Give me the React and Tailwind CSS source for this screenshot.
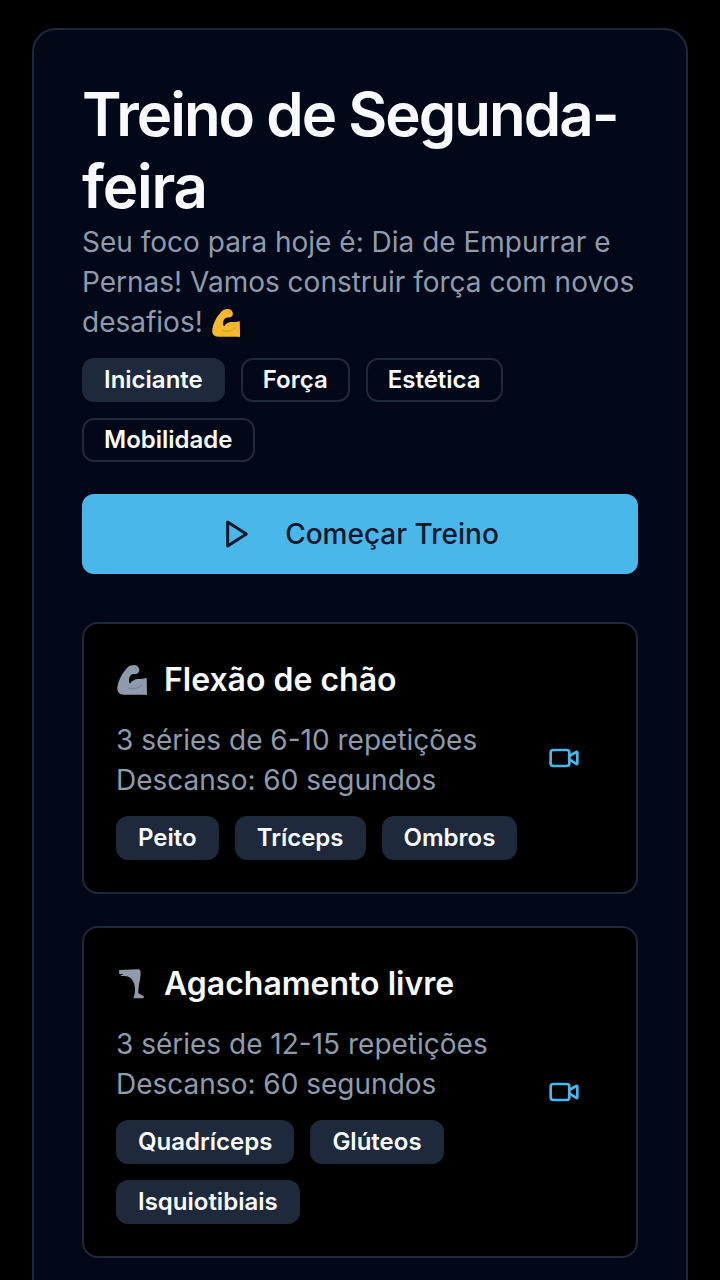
import { Video } from 'lucide-react';

const MuscleIcon = ({ color, shade, className }) => (
    <svg viewBox="0 0 32 32" className={className}>
        <path fill={color} d="M12 3C14 1.500 17 .800 19.500 1.200 22 1.800 23.800 4.500 23.300 7 22.800 9.500 20 10.500 17.500 10 15.500 10 13.500 12 13 15 12.800 17 13 18.500 14 19.500 16 16.500 19 15 22 15 25 15 28 14.500 30.700 14L31 31C24 30.500 12 31 6 30.500 3 30 1 27 1.300 24 2 18 5 11 9 6.500 10 5 11 3.800 12 3Z" />
        <path fill="none" stroke={shade} strokeWidth="1" strokeLinecap="round" d="M19 3.500l1 1.500M12 24c4 1.500 10 1 14-3" />
    </svg>
);

const LegIcon = () => (
    <svg viewBox="0 0 32 32" className="w-8 h-8" fill="#8f9bad">
        <path d="M3 2 22 1.300C23.800 1.300 24.800 3 24.700 5 24.500 9 23.800 12 23.300 15 22.700 18.500 22.300 22 22.300 25L28.300 28.700 27 30.300 17.300 30.300C18.300 27.500 19 25 19 22 19 19 18.500 16 17.300 13.700 16 11 14.500 9.500 12.300 8.700 10 8 7 8.500 4 8L7.500 6 3.300 6Z" />
    </svg>
);

const PlayIcon = () => (
    <svg viewBox="0 0 24 24" className="w-8 h-8" fill="none" stroke="currentColor" strokeWidth="2.25" strokeLinejoin="round" strokeLinecap="round">
        <polygon points="5 3 19 12 5 21 5 3" />
    </svg>
);

const Tag = ({ children, variant }) => (
    <span className={`inline-flex items-center h-[44px] px-[20px] rounded-[12px] border-2 text-[24px] leading-[32px] font-semibold text-[#f8fafc] ${variant === 'outline' ? 'border-[#1e293b]' : 'border-transparent bg-[#1e293b]'}`}>
        {children}
    </span>
);

const exercises = [
    {
        name: 'Flexão de chão',
        icon: <MuscleIcon color="#8f9bad" shade="#75818f" className="w-8 h-8" />,
        sets: '3 séries de 6-10 repetições',
        tags: ['Peito', 'Tríceps', 'Ombros'],
    },
    {
        name: 'Agachamento livre',
        icon: <LegIcon />,
        sets: '3 séries de 12-15 repetições',
        tags: ['Quadríceps', 'Glúteos', 'Isquiotibiais'],
    },
];

const App = () => {
    return (
        <div className="h-[1280px] overflow-hidden bg-black px-[32px] pt-[28px] font-['Inter',sans-serif]">
            <div className="h-[1400px] bg-[#020817] border-2 border-[#1e293b] rounded-[24px] px-[48px] pt-[48px]">
                <h1 className="text-[60px] leading-[72px] font-semibold text-[#f8fafc] tracking-[-2px]">
                    Treino de Segunda-<span className="tracking-[-1.2px]">feira</span>
                </h1>
                <p className="text-[28px] leading-[40px] text-[#8f9bad]">
                    Seu foco para hoje é: Dia de Empurrar e Pernas! Vamos construir força com novos desafios!{' '}
                    <MuscleIcon color="#f5b82e" shade="#d9921a" className="inline-block w-[30px] h-[30px] align-[-6px]" />
                </p>
                <div className="flex flex-wrap gap-4 mt-4">
                    <Tag>Iniciante</Tag>
                    <Tag variant="outline">Força</Tag>
                    <Tag variant="outline">Estética</Tag>
                    <Tag variant="outline">Mobilidade</Tag>
                </div>
                <button className="flex items-center justify-center gap-[32px] w-full h-[80px] mt-8 rounded-[12px] bg-[#4ab7eb] text-[#0f172a] text-[28px] font-medium">
                    <PlayIcon />
                    Começar Treino
                </button>
                <div className="flex flex-col gap-[32px] mt-[48px]">
                    {exercises.map((exercise) => (
                        <div key={exercise.name} className="flex items-center gap-[16px] bg-black border-2 border-[#1e293b] rounded-[16px] p-[32px]">
                            <div className="flex-1">
                                <div className="flex items-center gap-4 text-[32px] leading-[48px] font-semibold text-[#f8fafc]">
                                    {exercise.icon}
                                    {exercise.name}
                                </div>
                                <p className="mt-4 text-[28px] leading-[40px] text-[#8f9bad]">
                                    {exercise.sets}<br />Descanso: 60 segundos
                                </p>
                                <div className="flex flex-wrap gap-4 mt-4">
                                    {exercise.tags.map((tag) => (
                                        <Tag key={tag}>{tag}</Tag>
                                    ))}
                                </div>
                            </div>
                            <Video size={32} className="text-[#4ab7eb] mr-[24px] shrink-0" />
                        </div>
                    ))}
                </div>
            </div>
        </div>
    );
};

export default App;
